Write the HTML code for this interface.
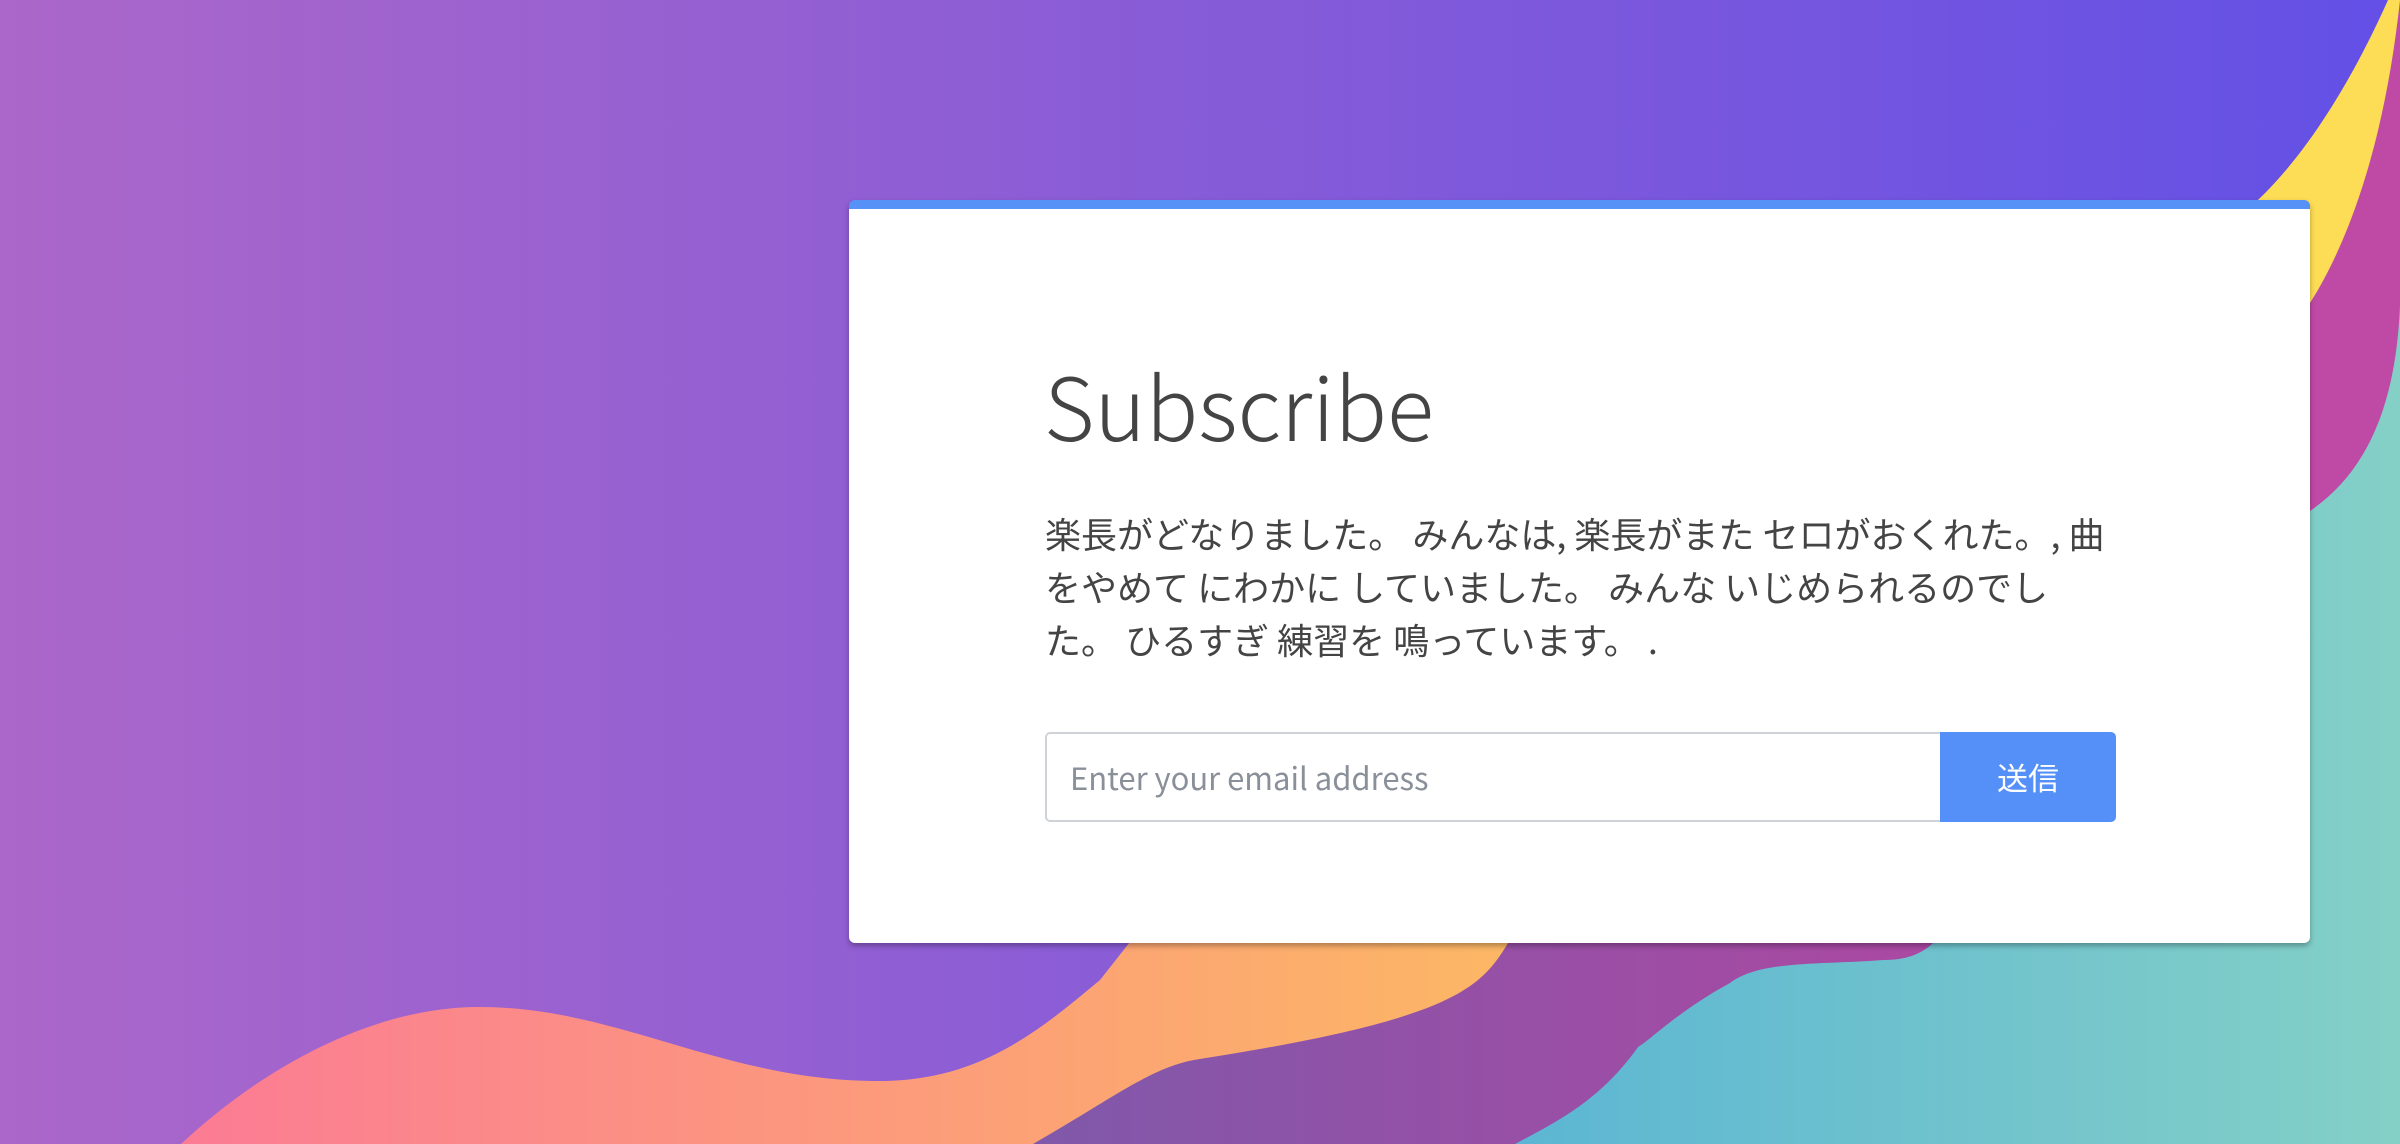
<!DOCTYPE html>
<html><head><meta charset="utf-8"><style>
html,body{margin:0;padding:0;width:2400px;height:1144px;overflow:hidden}
body{position:relative;font-family:"Liberation Sans","Noto Sans CJK JP",sans-serif}
svg.bg{position:absolute;left:0;top:0}
.card{position:absolute;left:849px;top:200px;width:1461px;height:743px;background:#fff;border-top:9px solid #5591f7;border-radius:6px;box-sizing:border-box;box-shadow:0 3px 6px rgba(0,0,0,.3)}
h1{position:absolute;left:195px;top:152px;margin:0;font-family:"Noto Sans CJK JP",sans-serif;font-weight:300;font-size:87px;line-height:1;color:#444;letter-spacing:0px}
p{position:absolute;left:196px;top:298px;margin:0;font-family:"Noto Sans CJK JP",sans-serif;font-size:36px;line-height:53px;color:#444;white-space:nowrap}
.inp{position:absolute;left:196px;top:523px;width:896px;height:90px;border:2px solid #cfd3d8;border-right:none;border-radius:5px 0 0 5px;box-sizing:border-box;font-family:"Noto Sans CJK JP",sans-serif;font-size:31px;color:#8a9099;line-height:86px;padding-left:23px}
.btn{position:absolute;left:1091px;top:523px;width:176px;height:90px;background:#5590f8;border-radius:0 5px 5px 0;color:#fff;font-family:"Noto Sans CJK JP",sans-serif;font-size:31px;line-height:90px;text-align:center}
</style></head><body>
<svg class="bg" width="2400" height="1144" viewBox="0 0 2400 1144">
<defs>
<linearGradient id="g0" x1="0" x2="1"><stop offset="0" stop-color="#ab67c9"/><stop offset="1" stop-color="#6350e6"/></linearGradient>
<linearGradient id="g1" x1="0" x2="1"><stop offset="0" stop-color="#fb7b94"/><stop offset="1" stop-color="#fcb864"/></linearGradient>
<linearGradient id="g2" x1="0" x2="1"><stop offset="0" stop-color="#8058aa"/><stop offset="1" stop-color="#ac48a2"/></linearGradient>
<linearGradient id="g3" x1="0" x2="1"><stop offset="0" stop-color="#5cb6d3"/><stop offset="1" stop-color="#84d0c7"/></linearGradient>
</defs>
<rect width="2400" height="1144" fill="url(#g0)"/>
<path d="M2388 0 L2400 0 L2400 320 L2200 340 L2200 240 C2260 215 2330 130 2388 0Z" fill="#fddd55"/>
<path d="M2400 0 L2400 600 L2200 600 L2200 330 L2310 303 C2350 240 2385 140 2400 0Z" fill="#be4aa5"/>
<path d="M2400 306 C2396 400 2370 470 2310 511 L1700 900 L1638 1047 C1600 1100 1560 1120 1515 1144 L2400 1144Z" fill="url(#g3)"/>
<path d="M1200 900 L1960 900 C1940 950 1915 960 1883 960 C1821 965 1760 960 1730 983 C1680 1010 1650 1040 1638 1047 C1600 1100 1560 1120 1515 1144 L1033 1144 C1060 1100 1100 1080 1133 1080 Z" fill="url(#g2)"/>
<path d="M181 1144 C260 1070 370 1007 479 1007 C620 1007 720 1081 880 1081 C980 1081 1040 1030 1100 980 L1163 900 L1530 900 L1508 943 C1480 990 1450 1020 1194 1060 C1150 1068 1110 1100 1033 1144 Z" fill="url(#g1)"/>
</svg>
<div class="card">
<h1>Subscribe</h1>
<p>楽長がどなりました。 みんなは, 楽長がまた セロがおくれた。, 曲<br>をやめて にわかに していました。 みんな いじめられるのでし<br>た。 ひるすぎ 練習を 鳴っています。 .</p>
<div class="inp">Enter your email address</div>
<div class="btn">送信</div>
</div>
</body></html>
